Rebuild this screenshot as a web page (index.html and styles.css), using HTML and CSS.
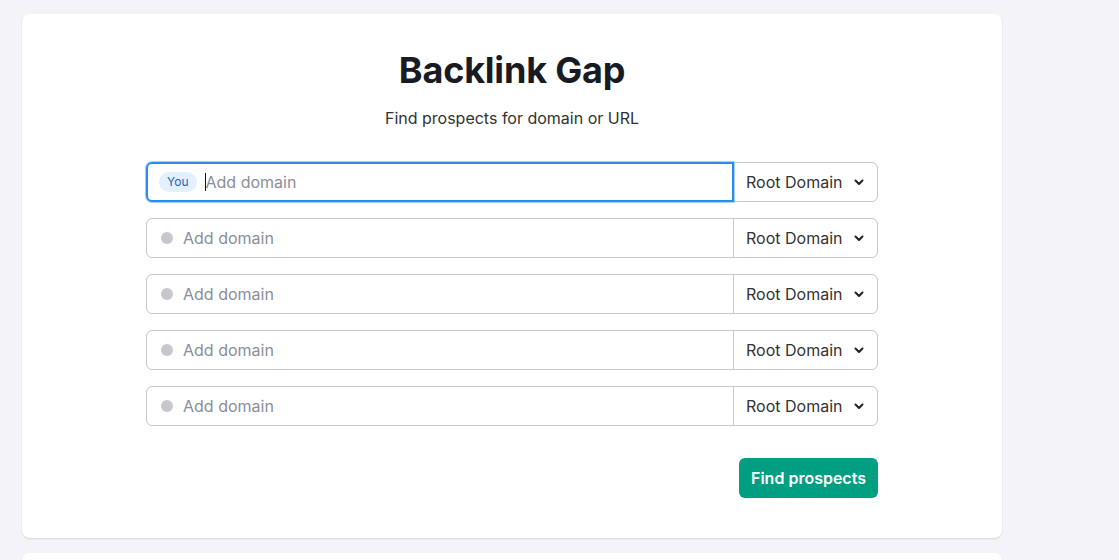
FILE: index.html
```html
<!DOCTYPE html>
<html>
<head>
    <title>Backlink Gap</title>
    <link rel="stylesheet" href="styles.css">
</head>
<body>
    <div class="page">
        <div class="card">
            <h1 class="title">Backlink Gap</h1>
            <p class="subtitle">Find prospects for domain or URL</p>

            <form class="domains">
                <div class="row">
                    <div class="field focused">
                        <span class="you">You</span>
                        <span class="caret"></span>
                        <span class="placeholder">Add domain</span>
                    </div>
                    <div class="select">Root Domain <svg width="12" height="12" viewBox="0 0 12 12"><path d="M2.5 4.5 6 8l3.5-3.5" fill="none" stroke="#222" stroke-width="2" stroke-linecap="round" stroke-linejoin="round"/></svg></div>
                </div>
                <div class="row">
                    <div class="field">
                        <span class="dot"></span>
                        <span class="placeholder">Add domain</span>
                    </div>
                    <div class="select">Root Domain <svg width="12" height="12" viewBox="0 0 12 12"><path d="M2.5 4.5 6 8l3.5-3.5" fill="none" stroke="#222" stroke-width="2" stroke-linecap="round" stroke-linejoin="round"/></svg></div>
                </div>
                <div class="row">
                    <div class="field">
                        <span class="dot"></span>
                        <span class="placeholder">Add domain</span>
                    </div>
                    <div class="select">Root Domain <svg width="12" height="12" viewBox="0 0 12 12"><path d="M2.5 4.5 6 8l3.5-3.5" fill="none" stroke="#222" stroke-width="2" stroke-linecap="round" stroke-linejoin="round"/></svg></div>
                </div>
                <div class="row">
                    <div class="field">
                        <span class="dot"></span>
                        <span class="placeholder">Add domain</span>
                    </div>
                    <div class="select">Root Domain <svg width="12" height="12" viewBox="0 0 12 12"><path d="M2.5 4.5 6 8l3.5-3.5" fill="none" stroke="#222" stroke-width="2" stroke-linecap="round" stroke-linejoin="round"/></svg></div>
                </div>
                <div class="row">
                    <div class="field">
                        <span class="dot"></span>
                        <span class="placeholder">Add domain</span>
                    </div>
                    <div class="select">Root Domain <svg width="12" height="12" viewBox="0 0 12 12"><path d="M2.5 4.5 6 8l3.5-3.5" fill="none" stroke="#222" stroke-width="2" stroke-linecap="round" stroke-linejoin="round"/></svg></div>
                </div>

                <div class="actions">
                    <button type="button" class="find">Find prospects</button>
                </div>
            </form>
        </div>
        <div class="card next"></div>
    </div>
</body>
</html>
```

FILE: styles.css
```css
body {
    font-family: Inter, "Noto Sans", Arial, sans-serif;
    margin: 0;
    padding: 0;
    background-color: #f4f4f8;
    color: #222;
}

.page {
    width: 980px;
    padding: 14px 0 0 22px;
    display: flex;
    flex-direction: column;
    gap: 15px;
}

.card {
    background-color: #fff;
    border-radius: 8px;
    box-shadow: 0 1px 2px rgba(0, 0, 0, 0.12);
    height: 524px;
    box-sizing: border-box;
    padding-top: 36px;
}

.card.next {
    height: 7px;
    padding: 0;
    border-radius: 8px 8px 0 0;
}

.title {
    margin: 0;
    text-align: center;
    font-size: 36px;
    font-weight: 700;
    line-height: 40px;
    letter-spacing: -0.2px;
    color: #191b23;
}

.subtitle {
    margin: 18px 0 0;
    text-align: center;
    font-size: 16px;
    line-height: 20px;
    color: #333;
}

.domains {
    width: 732px;
    margin: 34px auto 0;
    display: flex;
    flex-direction: column;
    gap: 16px;
}

.row {
    display: flex;
    height: 40px;
    border: 1px solid #c7c9d0;
    border-radius: 6px;
    box-sizing: border-box;
}

.field {
    flex: 1;
    display: flex;
    align-items: center;
    padding-left: 14px;
    border-right: 1px solid #c7c9d0;
    border-radius: 6px 0 0 6px;
    font-size: 16px;
}

.field.focused {
    margin: -1px 0 -1px -1px;
    border: 2px solid #2b8cf0;
    box-shadow: 0 0 0 1px #a8d2fb;
    padding-left: 11px;
    border-radius: 6px 0 0 6px;
}

.placeholder {
    color: #8b8e99;
}

.dot {
    width: 12px;
    height: 12px;
    border-radius: 50%;
    background-color: #c6c7cc;
    margin-right: 10px;
}

.you {
    background-color: #e2f0ff;
    color: #2a5fa8;
    font-size: 12px;
    line-height: 20px;
    padding: 0 8px;
    border-radius: 10px;
    margin-right: 8px;
}

.caret {
    width: 1px;
    height: 18px;
    background-color: #111;
}

.select {
    width: 143px;
    display: flex;
    align-items: center;
    padding: 0 12px;
    box-sizing: border-box;
    gap: 6px;
    font-size: 16px;
    color: #333;
    justify-content: space-between;
}

.actions {
    display: flex;
    justify-content: flex-end;
    margin-top: 16px;
}

.find {
    height: 40px;
    width: 139px;
    border: none;
    border-radius: 6px;
    background-color: #009f81;
    color: #fff;
    font-family: inherit;
    font-size: 16px;
    font-weight: 600;
}
```
